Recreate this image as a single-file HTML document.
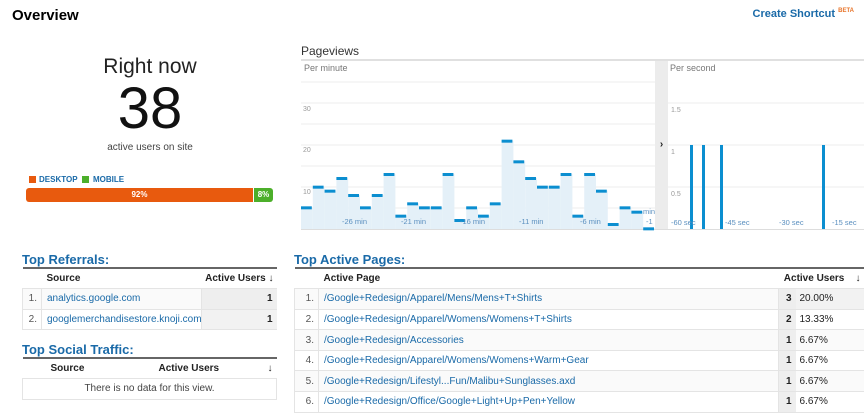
<!DOCTYPE html>
<html><head><style>
*{margin:0;padding:0;box-sizing:border-box}
body{width:864px;height:411px;overflow:hidden;background:#fff;font-family:"Liberation Sans",Arial,sans-serif;position:relative;color:#222;white-space:nowrap}
.a{position:absolute}
h1{position:absolute;left:12px;top:7px;font-size:15px;font-weight:bold;color:#000}
.sc{right:10px;top:8px;font-size:11px;font-weight:bold;color:#1a6aa8}
.sc sup{font-size:6px;color:#e8742a;font-weight:bold;vertical-align:5px}
.c{text-align:center}
h2{position:absolute;font-size:13px;font-weight:bold;color:#1a6aa8}
table{position:absolute;border-collapse:collapse;font-size:10px;border-top:2px solid #666;table-layout:fixed}
td,th{height:20.6px;border-bottom:1px solid #e4e4e4;padding:0 4px;white-space:nowrap;overflow:hidden}
th{text-align:left;font-weight:bold;color:#222}
td.l{color:#1a6aa8;padding-left:5px}
td.n{color:#555;text-align:right;border-right:1px solid #e4e4e4}
tbody td{border-left:1px solid #e4e4e4}
</style></head><body>
<h1>Overview</h1>
<div class="a sc">Create Shortcut <sup>BETA</sup></div>
<div class="a c" style="left:50px;width:200px;top:55px;font-size:21px;color:#222">Right now</div>
<div class="a c" style="left:50px;width:200px;top:76px;font-size:58px;font-weight:300;color:#111;line-height:66px">38</div>
<div class="a c" style="left:50px;width:200px;top:142px;font-size:10px;color:#444">active users on site</div>
<div class="a" style="left:29px;top:176px;width:7px;height:7px;background:#e85a0e"></div>
<div class="a" style="left:39px;top:175px;font-size:8px;font-weight:bold;color:#1a6aa8">DESKTOP</div>
<div class="a" style="left:82px;top:176px;width:7px;height:7px;background:#4caf2a"></div>
<div class="a" style="left:93px;top:175px;font-size:8px;font-weight:bold;color:#1a6aa8">MOBILE</div>
<div class="a c" style="left:26px;top:188px;width:227px;height:14px;background:#e85a0e;border-radius:3px 0 0 3px;color:#fff;font-size:8px;line-height:14px;font-weight:bold">92%</div>
<div class="a c" style="left:254px;top:188px;width:19px;height:14px;background:#4caf2a;border-radius:0 3px 3px 0;color:#fff;font-size:8px;line-height:14px;font-weight:bold">8%</div>

<div class="a" style="left:301px;top:44px;font-size:12px;color:#333">Pageviews</div>
<div class="a" style="left:301px;top:59px;width:563px;height:2px;background:#e0e0e0"></div>
<div class="a" style="left:655px;top:61px;width:13px;height:168px;background:#ececec;font-size:10px;font-weight:bold;line-height:168px;text-align:center">›</div>
<div class="a" style="left:301px;top:229px;width:563px;height:1px;background:#ddd"></div>
<div class="a" style="left:304px;top:63px;font-size:9px;color:#777">Per minute</div>
<div class="a" style="left:670px;top:63px;font-size:9px;color:#777">Per second</div>
<svg class="a" style="left:0;top:0" width="864" height="411">
<g stroke="#eee" stroke-width="1">
<line x1="301" x2="655" y1="82" y2="82"/><line x1="301" x2="655" y1="103" y2="103"/><line x1="301" x2="655" y1="124" y2="124"/><line x1="301" x2="655" y1="145" y2="145"/><line x1="301" x2="655" y1="166" y2="166"/><line x1="301" x2="655" y1="187" y2="187"/><line x1="301" x2="655" y1="208" y2="208"/>
<line x1="668" x2="864" y1="103" y2="103"/><line x1="668" x2="864" y1="145" y2="145"/><line x1="668" x2="864" y1="187" y2="187"/>
</g>
<g font-size="7" fill="#999" font-family="Liberation Sans">
<text x="303" y="111">30</text><text x="303" y="152">20</text><text x="303" y="194">10</text>
<text x="671" y="112">1.5</text><text x="671" y="154">1</text><text x="671" y="196">0.5</text>
</g>
<g id="bars"></g>
<g fill="#0b8ed0">
<rect x="690" y="145" width="3" height="84"/><rect x="702" y="145" width="3" height="84"/><rect x="720" y="145" width="3" height="84"/><rect x="822" y="145" width="3" height="84"/>
</g>
<g font-size="7.5" fill="#5a8fbf" font-family="Liberation Sans">
<text x="342" y="224">-26 min</text><text x="401" y="224">-21 min</text><text x="460" y="224">-16 min</text><text x="519" y="224">-11 min</text><text x="580" y="224">-6 min</text><text x="643" y="214">min</text><text x="646" y="224">-1</text>
<text x="671" y="225">-60 sec</text><text x="725" y="225">-45 sec</text><text x="779" y="225">-30 sec</text><text x="832" y="225">-15 sec</text>
</g>
</svg>
<script>
var z=[502,440,452,414,465,502,465,402,527,490,502,502,402,540,502,527,490,302,364,414,440,440,402,527,402,452,552,502,515,565];
var s='',w=354/30;
z.forEach(function(v,i){var y=40+v/3,x=301+i*w;s+='<rect x="'+x+'" y="'+y+'" width="'+w+'" height="'+(229-y)+'" fill="#e4f0f8"/><rect x="'+x+'" y="'+(y-1)+'" width="'+(w-1)+'" height="3" fill="#0b8ed0"/>';});
document.getElementById('bars').innerHTML=s;
</script>

<h2 style="left:22px;top:252px">Top Referrals:</h2>
<table style="left:22px;top:267px;width:254px">
<colgroup><col style="width:19px"><col style="width:160px"><col style="width:75px"></colgroup>
<tr><th></th><th style="padding-left:5px">Source</th><th style="text-align:right;padding:0 3px 0 0">Active Users ↓</th></tr>
<tbody>
<tr style="background:#fafafa"><td class="n">1.</td><td class="l">analytics.google.com</td><td style="text-align:right;font-weight:bold;background:#eee">1</td></tr>
<tr><td class="n">2.</td><td class="l">googlemerchandisestore.knoji.com</td><td style="text-align:right;font-weight:bold;background:#f2f2f2">1</td></tr>
</tbody></table>
<h2 style="left:22px;top:342px">Top Social Traffic:</h2>
<table style="left:22px;top:357px;width:254px">
<colgroup><col style="width:90px"><col style="width:130px"><col style="width:34px"></colgroup>
<tr><th style="padding-left:28px">Source</th><th style="padding-left:46px">Active Users</th><th style="text-align:right">↓</th></tr>
<tr><td colspan="3" style="text-align:center;color:#444;border:1px solid #e4e4e4">There is no data for this view.</td></tr>
</table>

<h2 style="left:294px;top:252px">Top Active Pages:</h2>
<table style="left:294px;top:267px;width:570px">
<colgroup><col style="width:24px"><col style="width:460px"><col style="width:17px"><col style="width:69px"></colgroup>
<tr><th></th><th style="padding-left:5px">Active Page</th><th colspan="2" style="text-align:right;padding-right:4px">Active Users&nbsp;&nbsp;&nbsp;&nbsp;↓</th></tr>
<tbody>
<tr style="background:#fafafa"><td class="n">1.</td><td class="l">/Google+Redesign/Apparel/Mens/Mens+T+Shirts</td><td style="text-align:right;font-weight:bold;background:#eee">3</td><td style="background:#f2f2f2;border-left:none">20.00%</td></tr>
<tr><td class="n">2.</td><td class="l">/Google+Redesign/Apparel/Womens/Womens+T+Shirts</td><td style="text-align:right;font-weight:bold;background:#eee">2</td><td style="border-left:none">13.33%</td></tr>
<tr style="background:#fafafa"><td class="n">3.</td><td class="l">/Google+Redesign/Accessories</td><td style="text-align:right;font-weight:bold;background:#eee">1</td><td style="border-left:none">6.67%</td></tr>
<tr><td class="n">4.</td><td class="l">/Google+Redesign/Apparel/Womens/Womens+Warm+Gear</td><td style="text-align:right;font-weight:bold;background:#eee">1</td><td style="border-left:none">6.67%</td></tr>
<tr style="background:#fafafa"><td class="n">5.</td><td class="l">/Google+Redesign/Lifestyl...Fun/Malibu+Sunglasses.axd</td><td style="text-align:right;font-weight:bold;background:#eee">1</td><td style="border-left:none">6.67%</td></tr>
<tr><td class="n">6.</td><td class="l">/Google+Redesign/Office/Google+Light+Up+Pen+Yellow</td><td style="text-align:right;font-weight:bold;background:#eee">1</td><td style="border-left:none">6.67%</td></tr>
</tbody></table>
</body></html>
